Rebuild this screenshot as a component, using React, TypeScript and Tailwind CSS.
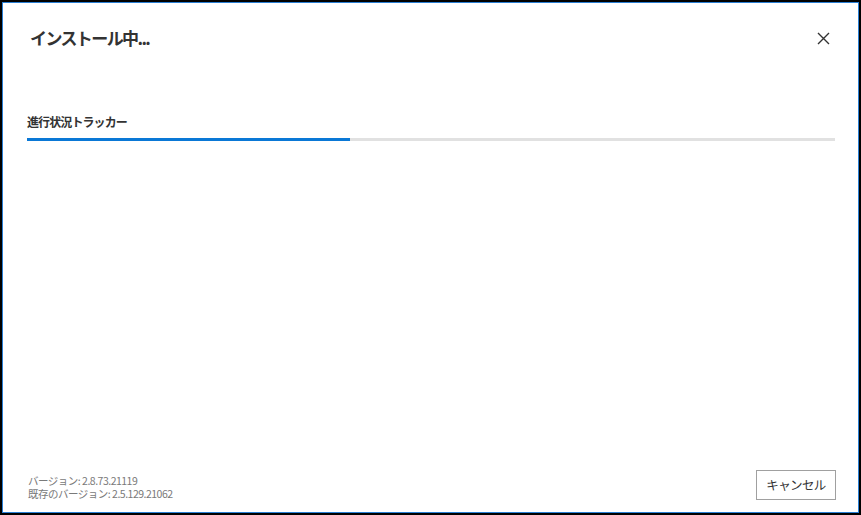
const jp = "font-['Segoe_UI','Noto_Sans_CJK_JP',sans-serif]";

function CloseIcon() {
  return (
    <svg width="13" height="13" viewBox="0 0 13 13" fill="none">
      <path d="M1 1L12 12M12 1L1 12" stroke="#333" strokeWidth="1.4" />
    </svg>
  );
}

export default function App() {
  const progress = 40;
  return (
    <div className={`w-[861px] h-[515px] bg-black p-[2px] ${jp}`}>
      <div className="w-full h-full border border-[#2a7fd4] bg-white flex flex-col">
        <div className="flex justify-between items-start pl-[27px] pr-[28px] pt-[22px]">
          <h1 className="text-[17px] leading-[26px] font-semibold text-[#333] tracking-[-1.6px]">インストール中...</h1>
          <button className="mt-[7px] p-0">
            <CloseIcon />
          </button>
        </div>

        <div className="mt-[63px] px-[24px]">
          <div className="text-[12px] leading-[16px] font-bold text-[#333] tracking-[-0.9px]">進行状況トラッカー</div>
          <div className="mt-[8px] h-[3px] w-[808px] bg-[#e1e1e1]">
            <div className="h-full bg-[#0a78d6]" style={{ width: `${progress}%` }} />
          </div>
        </div>

        <div className="flex-1" />

        <div className="flex justify-between items-end pl-[25px] pr-[22px] pb-[12px]">
          <div className="text-[10.5px] leading-[13px] text-[#7a7a7a] tracking-[-0.5px]">
            <div>バージョン: 2.8.73.21119</div>
            <div>既存のバージョン: 2.5.129.21062</div>
          </div>
          <button className="w-[80px] h-[30px] border border-[#a0a0a0] bg-white text-[12.5px] text-[#333] tracking-[-0.6px]">
            キャンセル
          </button>
        </div>
      </div>
    </div>
  );
}
